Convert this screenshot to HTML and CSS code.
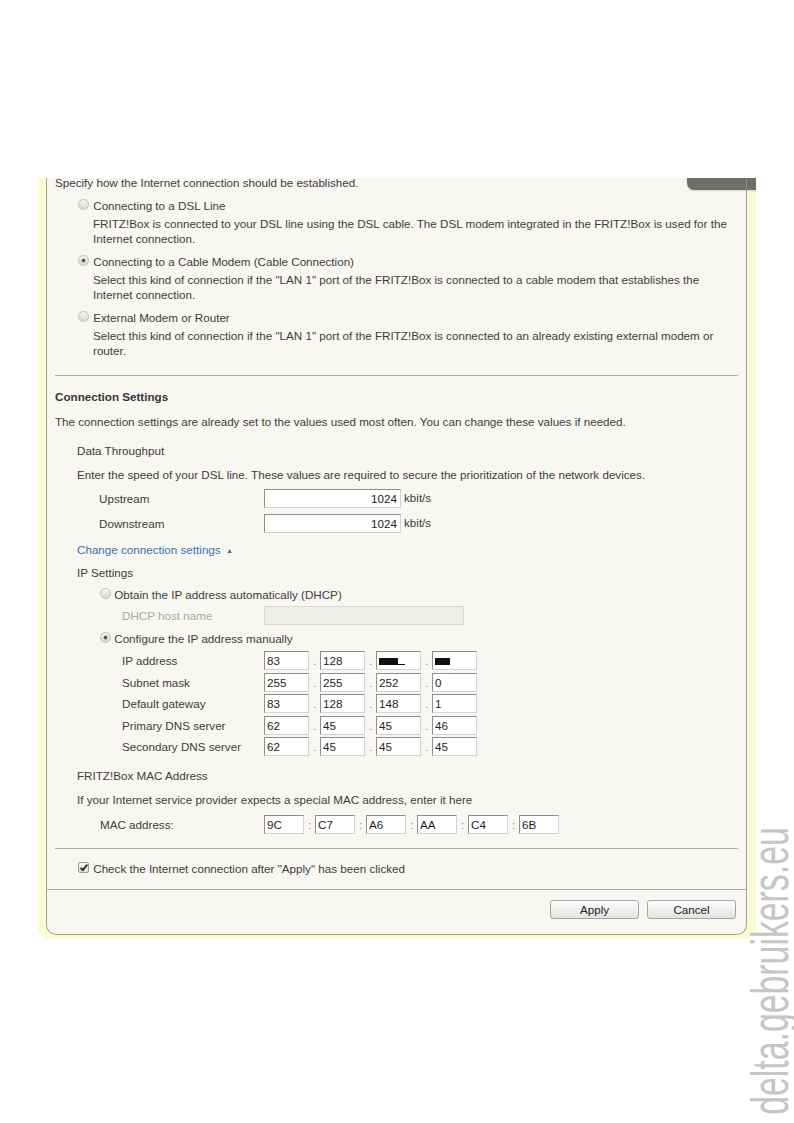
FILE: index.html
```html
<!DOCTYPE html>
<html lang="en">
<head>
  <meta charset="UTF-8" />
  <meta name="viewport" content="width=device-width, initial-scale=1.0"/>
  <title>Internet Connection - FRITZ!Box</title>
  <link rel="stylesheet" href="styles.css">
</head>
<body>
  <div class="frame">
    <div class="panel">
      <div class="tab"></div>

      <div class="content">
        <p class="intro">Specify how the Internet connection should be established.</p>

        <div class="options">
          <label class="opt-label"><input type="radio" name="access" /> Connecting to a DSL Line</label>
          <p class="opt-desc">FRITZ!Box is connected to your DSL line using the DSL cable. The DSL modem integrated in the FRITZ!Box is used for the Internet connection.</p>

          <label class="opt-label"><input type="radio" name="access" checked /> Connecting to a Cable Modem (Cable Connection)</label>
          <p class="opt-desc">Select this kind of connection if the "LAN 1" port of the FRITZ!Box is connected to a cable modem that establishes the Internet connection.</p>

          <label class="opt-label"><input type="radio" name="access" /> External Modem or Router</label>
          <p class="opt-desc">Select this kind of connection if the "LAN 1" port of the FRITZ!Box is connected to an already existing external modem or router.</p>
        </div>

        <hr class="sep" />

        <h3 class="section-title">Connection Settings</h3>
        <p class="section-text">The connection settings are already set to the values used most often. You can change these values if needed.</p>

        <div class="group">
          <p class="group-title">Data Throughput</p>
          <p class="group-text">Enter the speed of your DSL line. These values are required to secure the prioritization of the network devices.</p>

          <div class="row rate">
            <span class="row-label">Upstream</span>
            <input class="field" type="text" value="1024" />
            <span class="unit">kbit/s</span>
          </div>
          <div class="row rate">
            <span class="row-label">Downstream</span>
            <input class="field" type="text" value="1024" />
            <span class="unit">kbit/s</span>
          </div>

          <p class="toggle"><a href="#">Change connection settings <span class="arrow">&#9650;</span></a></p>

          <p class="group-title ip-title">IP Settings</p>
          <div class="sub">
            <label class="opt-label dhcp"><input type="radio" name="ipmode" /> Obtain the IP address automatically (DHCP)</label>
            <div class="row ip host-row">
              <span class="row-label disabled">DHCP host name</span>
              <input class="field host" type="text" disabled />
            </div>

            <label class="opt-label manual"><input type="radio" name="ipmode" checked /> Configure the IP address manually</label>
            <div class="row ip first">
              <span class="row-label">IP address</span>
              <input class="field" type="text" value="83" /><span class="dot">.</span>
              <input class="field" type="text" value="128" /><span class="dot">.</span>
              <span class="field masked"><span class="blackout wide"></span></span><span class="dot">.</span>
              <span class="field masked"><span class="blackout"></span></span>
            </div>
            <div class="row ip">
              <span class="row-label">Subnet mask</span>
              <input class="field" type="text" value="255" /><span class="dot">.</span>
              <input class="field" type="text" value="255" /><span class="dot">.</span>
              <input class="field" type="text" value="252" /><span class="dot">.</span>
              <input class="field" type="text" value="0" />
            </div>
            <div class="row ip">
              <span class="row-label">Default gateway</span>
              <input class="field" type="text" value="83" /><span class="dot">.</span>
              <input class="field" type="text" value="128" /><span class="dot">.</span>
              <input class="field" type="text" value="148" /><span class="dot">.</span>
              <input class="field" type="text" value="1" />
            </div>
            <div class="row ip">
              <span class="row-label">Primary DNS server</span>
              <input class="field" type="text" value="62" /><span class="dot">.</span>
              <input class="field" type="text" value="45" /><span class="dot">.</span>
              <input class="field" type="text" value="45" /><span class="dot">.</span>
              <input class="field" type="text" value="46" />
            </div>
            <div class="row ip">
              <span class="row-label">Secondary DNS server</span>
              <input class="field" type="text" value="62" /><span class="dot">.</span>
              <input class="field" type="text" value="45" /><span class="dot">.</span>
              <input class="field" type="text" value="45" /><span class="dot">.</span>
              <input class="field" type="text" value="45" />
            </div>
          </div>

          <p class="group-title mac-title">FRITZ!Box MAC Address</p>
          <p class="group-text">If your Internet service provider expects a special MAC address, enter it here</p>
          <div class="row mac">
            <span class="row-label">MAC address:</span>
            <input class="field" type="text" value="9C" /><span class="colon">:</span>
            <input class="field" type="text" value="C7" /><span class="colon">:</span>
            <input class="field" type="text" value="A6" /><span class="colon">:</span>
            <input class="field" type="text" value="AA" /><span class="colon">:</span>
            <input class="field" type="text" value="C4" /><span class="colon">:</span>
            <input class="field" type="text" value="6B" />
          </div>
        </div>

        <hr class="sep sep-check" />

        <label class="check"><input type="checkbox" checked /> Check the Internet connection after "Apply" has been clicked</label>
      </div>

      <div class="buttons">
        <button type="button">Apply</button>
        <button type="button">Cancel</button>
      </div>
    </div>
  </div>

  <div class="watermark">delta.gebruikers.eu</div>
</body>
</html>
```

FILE: styles.css
```css
body {
  margin: 0;
  background: #fff;
  font-family: "Liberation Sans", Arial, sans-serif;
  font-size: 11.65px;
  line-height: 15px;
  color: #3d3d3d;
}
p {
  margin: 0;
}

/* yellow page border around the content box */
.frame {
  width: 701px;
  margin: 178px 0 0 38px;
  padding: 0 9px 4px 8px;
  background: #fdfbd3;
  border-radius: 0 0 12px 12px;
}
.panel {
  position: relative;
  background: #f8f7f2;
  border: 1px solid #a4a394;
  border-top: 0;
  border-radius: 0 0 10px 10px;
}
.tab {
  position: absolute;
  top: 0;
  right: -10px;
  width: 69px;
  height: 12px;
  background: linear-gradient(to right, #6f6f6a 59px, #8e8e87 59px, #8e8e87 60px, #6f6f6a 60px);
  border-bottom-left-radius: 7px;
  box-shadow: 0 1px 2px rgba(0, 0, 0, 0.15);
}
.content {
  padding: 1px 8px 13px;
}
.intro {
  margin-top: -4px;
}

/* connection type */
.options {
  margin-left: 22px;
}
.opt-label {
  display: block;
  margin-top: 8px;
}
.opt-desc {
  margin-top: 3px;
  padding-left: 16px;
}
input[type=radio] {
  appearance: none;
  box-sizing: border-box;
  width: 11px;
  height: 11px;
  margin: 0 1px 0 1px;
  border: 1px solid #bdbdbd;
  border-radius: 50%;
  background: linear-gradient(#f6f6f6, #d9d9d9);
  vertical-align: baseline;
}
input[type=radio]:checked {
  background: radial-gradient(circle, #5a5a5a 0, #5a5a5a 1.6px, transparent 2.3px), linear-gradient(#f6f6f6, #d9d9d9);
}

.sep {
  height: 0;
  margin: 17px 0 0;
  border: 0;
  border-top: 1px solid #aaaea1;
}

.section-title {
  margin: 13px 0 0;
  font-size: 11.65px;
  line-height: 15px;
  font-weight: bold;
  color: #353535;
}
.section-text {
  margin-top: 10px;
}

.group {
  margin-left: 22px;
}
.group-title {
  margin-top: 14px;
}
.group-text {
  margin-top: 9px;
}

/* form rows */
.row {
  display: flex;
  align-items: center;
}
.row-label {
  flex: none;
}
.field {
  box-sizing: border-box;
  display: block;
  height: 19px;
  margin: 0;
  padding: 0 2px;
  border: 1px solid;
  border-color: #8f8f8f #d3d3d3 #d3d3d3 #8f8f8f;
  background: #fff;
  font: 11.65px "Liberation Sans", Arial, sans-serif;
  color: #1e1e1e;
}
.rate {
  margin-top: 7px;
  padding-left: 22px;
}
.rate + .rate {
  margin-top: 6px;
}
.rate .row-label {
  width: 165px;
}
.rate .field {
  width: 137px;
  padding-right: 3px;
  text-align: right;
}
.unit {
  margin: -3px 0 0 3px;
}

.toggle {
  margin-top: 9px;
}
.toggle a {
  color: #3a70ad;
  text-decoration: none;
}
.arrow {
  margin-left: 2px;
  font-size: 7px;
  vertical-align: 1px;
}

.ip-title {
  margin-top: 7px;
}
.sub {
  margin-left: 22px;
}
.sub input[type=radio] {
  margin-right: 0;
}
.sub .dhcp {
  margin-top: 7px;
}
.sub .manual {
  margin-top: 6px;
}
.ip {
  margin-top: 2.5px;
  padding-left: 23px;
}
.ip.host-row {
  margin-top: 4px;
}
.ip.first {
  margin-top: 5px;
}
.ip .row-label {
  width: 142px;
}
.ip .field {
  width: 45px;
}
.ip .field.host {
  width: 200px;
  background: #efeee9;
  border-color: #d8d7d1;
}
.row-label.disabled {
  color: #a9a9a9;
}
.dot,
.colon {
  flex: none;
  width: 11px;
  text-align: center;
  color: #8a8a8a;
}

/* blacked-out address parts */
.masked {
  position: relative;
}
.blackout {
  position: absolute;
  left: 2px;
  top: 6px;
  width: 15px;
  height: 7px;
  background: #111;
}
.blackout.wide {
  width: 19px;
  box-shadow: 10px 3px 0 -3px #111;
}

.mac-title {
  margin-top: 12px;
}
.mac {
  margin-top: 8px;
  padding-left: 23px;
}
.mac .row-label {
  width: 164px;
}
.mac .field {
  width: 40px;
}

.sep-check {
  margin-top: 14px;
}
.check {
  display: block;
  margin: 12px 0 0 22px;
}
input[type=checkbox] {
  appearance: none;
  position: relative;
  box-sizing: border-box;
  width: 11px;
  height: 11px;
  margin: 0 1px 0 1px;
  border: 1px solid #9d9d9d;
  border-radius: 2px;
  background: linear-gradient(#fbfbfb, #dedede);
  vertical-align: baseline;
}
input[type=checkbox]:checked::after {
  content: "";
  position: absolute;
  left: 3px;
  top: 0;
  width: 2px;
  height: 6px;
  border: solid #2f2f2f;
  border-width: 0 2px 2px 0;
  transform: rotate(40deg);
}

/* apply / cancel bar */
.buttons {
  display: flex;
  justify-content: flex-end;
  gap: 8px;
  padding: 10px 10px 15px;
  border-top: 1px solid #aaaea1;
}
.buttons button {
  box-sizing: border-box;
  width: 89px;
  height: 19px;
  padding: 0;
  border: 1px solid #a5a5a5;
  border-radius: 3px;
  background: linear-gradient(#fdfdfd, #e3e3e3);
  font: 11.65px "Liberation Sans", Arial, sans-serif;
  color: #222;
}

.watermark {
  position: absolute;
  left: 770px;
  top: 971px;
  font-family: "Liberation Sans", Arial, sans-serif;
  font-size: 52px;
  line-height: 42px;
  white-space: nowrap;
  color: #c6c6c6;
  transform: translate(-50%, -50%) rotate(-90deg) scaleX(0.65);
}
```
